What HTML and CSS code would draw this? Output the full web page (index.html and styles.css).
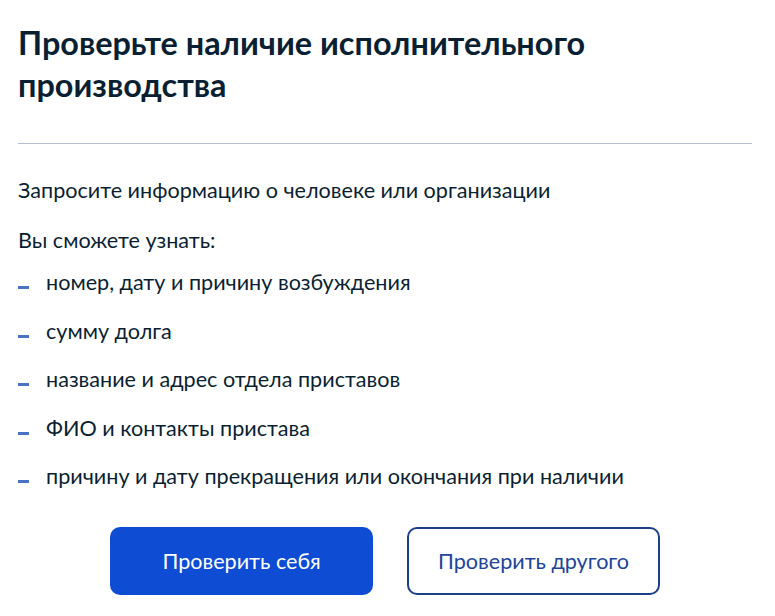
FILE: index.html
```html
<!DOCTYPE html>
<html lang="ru">
<head>
<meta charset="utf-8">
<title>Проверьте наличие исполнительного производства</title>
<link rel="stylesheet" href="styles.css">
</head>
<body>
<main class="card">
  <h1 class="title">Проверьте наличие исполнительного производства</h1>
  <hr class="divider">
  <p class="lead">Запросите информацию о человеке или организации</p>
  <p class="lead lead-second">Вы сможете узнать:</p>
  <ul class="list">
    <li class="item">номер, дату и причину возбуждения</li>
    <li class="item">сумму долга</li>
    <li class="item">название и адрес отдела приставов</li>
    <li class="item">ФИО и контакты пристава</li>
    <li class="item">причину и дату прекращения или окончания при наличии</li>
  </ul>
  <div class="actions">
    <button class="btn btn-primary" type="button">Проверить себя</button>
    <button class="btn btn-secondary" type="button">Проверить другого</button>
  </div>
</main>
</body>
</html>
```
FILE: styles.css
```css
* { box-sizing: border-box; }

html, body {
  margin: 0;
  padding: 0;
  background: #ffffff;
}

body {
  font-family: Lato, "Noto Sans", "Liberation Sans", sans-serif;
  color: #0b1f33;
}

.card {
  padding: 22px 23px 0 18px;
}

.title {
  margin: 0;
  font-size: 32.4px;
  line-height: 42px;
  font-weight: 700;
  color: #0b1f33;
}

.divider {
  margin: 37px 0 0;
  border: 0;
  height: 1px;
  background: #b3bfd1;
}

.lead {
  margin: 32px 0 0;
  font-size: 21.6px;
  line-height: 29px;
}

.lead-second {
  margin-top: 21px;
}

.list {
  list-style: none;
  margin: 13px 0 0;
  padding: 0;
}

.item {
  display: flex;
  font-size: 21.6px;
  line-height: 29px;
}

.item + .item {
  margin-top: 19.5px;
}

.item::before {
  content: "";
  flex: none;
  width: 11px;
  height: 3px;
  margin-top: 18px;
  margin-right: 17px;
  background: #4a72c5;
}

.actions {
  display: flex;
  justify-content: center;
  gap: 34px;
  margin-top: 36px;
}

.btn {
  height: 68px;
  border-radius: 10px;
  font-family: Lato, "Noto Sans", "Liberation Sans", sans-serif;
  font-size: 21.6px;
  cursor: pointer;
}

.btn-primary {
  width: 263px;
  background: #0d4cd3;
  border: 0;
  color: #ffffff;
}

.btn-secondary {
  width: 253px;
  background: #ffffff;
  border: 2px solid #1b3f88;
  color: #1e4599;
}
```
